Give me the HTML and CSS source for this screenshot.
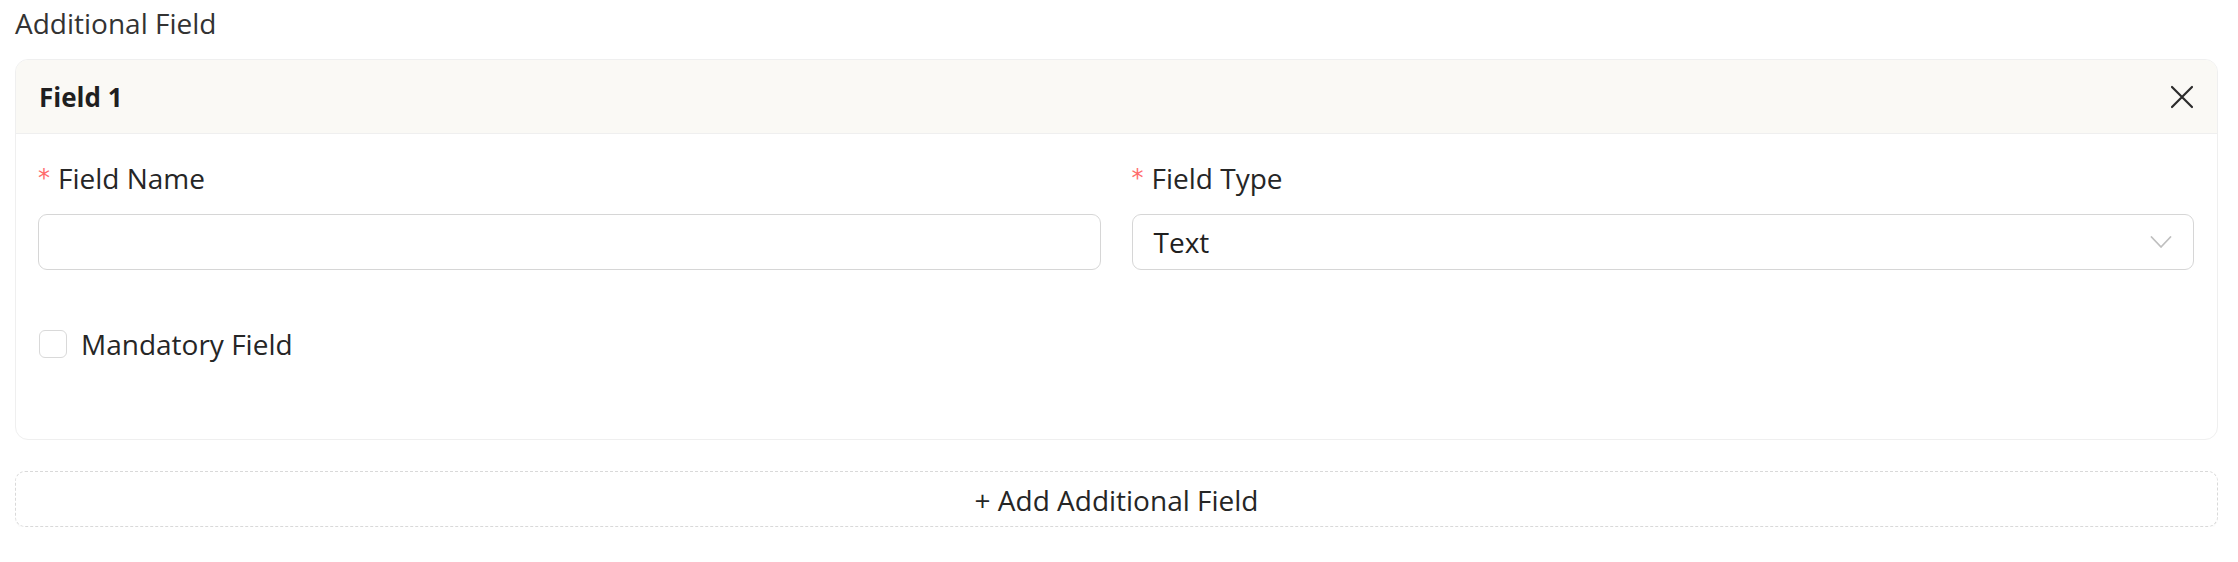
FILE: index.html
```html
<!DOCTYPE html>
<html lang="en">
<head>
<meta charset="utf-8">
<title>Additional Field</title>
<link rel="stylesheet" href="styles.css">
</head>
<body>
<div class="page">
  <div class="section-title">Additional Field</div>
  <div class="card">
    <div class="card-head">
      <span class="card-title">Field 1</span>
      <button class="close-btn" aria-label="Remove">
        <svg width="24" height="24" viewBox="0 0 24 24"><path d="M2 2 L22 22 M22 2 L2 22" stroke="#2b2b2b" stroke-width="2.2" stroke-linecap="round" fill="none"/></svg>
      </button>
    </div>
    <div class="card-body">
      <div class="row">
        <div class="form-item">
          <label class="label"><span class="req">*</span>Field Name</label>
          <div class="input"></div>
        </div>
        <div class="form-item">
          <label class="label"><span class="req">*</span>Field Type</label>
          <div class="input select">
            <span class="select-value">Text</span>
            <svg class="chevron" width="22" height="14" viewBox="0 0 22 14"><path d="M1.5 2 L11 12 L20.5 2" stroke="#bfbfbf" stroke-width="1.8" fill="none" stroke-linecap="round" stroke-linejoin="round"/></svg>
          </div>
        </div>
      </div>
      <label class="check-row"><span class="checkbox"></span><span class="check-label">Mandatory Field</span></label>
    </div>
  </div>
  <button class="add-btn">+ Add Additional Field</button>
</div>
</body>
</html>
```

FILE: styles.css
```css
* { box-sizing: border-box; }
html, body { margin: 0; padding: 0; background: #ffffff; }
body {
  font-family: "Open Sans", "Noto Sans", "Liberation Sans", sans-serif;
  color: #1f1f1f;
  font-size: 28px;
}
.page {
  padding: 0 20px 0 15px;
}
.section-title {
  height: 46px;
  line-height: 46px;
  font-size: 28px;
  color: #333333;
  margin-bottom: 13px;
}
.card {
  border: 1px solid #efefef;
  border-radius: 13px;
  overflow: hidden;
}
.card-head {
  height: 74px;
  background: #faf9f5;
  border-bottom: 1px solid #efefef;
  display: flex;
  align-items: center;
  justify-content: space-between;
  padding: 0 23px 0 23px;
}
.card-title {
  font-weight: 700;
  font-size: 26px;
  color: #1f1f1f;
}
.close-btn {
  background: none;
  border: 0;
  padding: 0;
  width: 24px;
  height: 24px;
  display: flex;
  cursor: pointer;
}
.card-body {
  padding: 24px 23px 75px 22px;
}
.row {
  display: grid;
  grid-template-columns: 1fr 1fr;
  column-gap: 31px;
}
.form-item {
  display: flex;
  flex-direction: column;
}
.label {
  height: 40px;
  line-height: 40px;
  font-size: 28px;
  color: #262626;
  margin-bottom: 16px;
  display: flex;
  align-items: center;
}
.req {
  color: #ff6b6b;
  font-size: 24px;
  margin-right: 8px;
  font-family: "DejaVu Sans", sans-serif;
}
.input {
  height: 56px;
  border: 1px solid #d6d6d6;
  border-radius: 9px;
  background: #fff;
}
.select {
  display: flex;
  align-items: center;
  justify-content: space-between;
  padding: 0 21px 0 21px;
}
.select-value {
  font-size: 28px;
  color: #1f1f1f;
}
.check-row {
  display: flex;
  align-items: center;
  height: 40px;
  margin-top: 54px;
  gap: 14px;
  padding-left: 1px;
}
.checkbox {
  width: 28px;
  height: 28px;
  border: 1.5px solid #d9d9d9;
  border-radius: 6px;
  background: #fff;
}
.check-label {
  font-size: 28px;
  color: #262626;
}
.add-btn {
  display: block;
  width: 100%;
  height: 56px;
  margin-top: 31px;
  border: 1.5px dashed #d9d9d9;
  border-radius: 10px;
  background: #fff;
  font-family: inherit;
  font-size: 28px;
  color: #262626;
  cursor: pointer;
  padding: 2px 0 0 0;
  box-shadow: 0 2px 0 rgba(0,0,0,0.015);
}
```
